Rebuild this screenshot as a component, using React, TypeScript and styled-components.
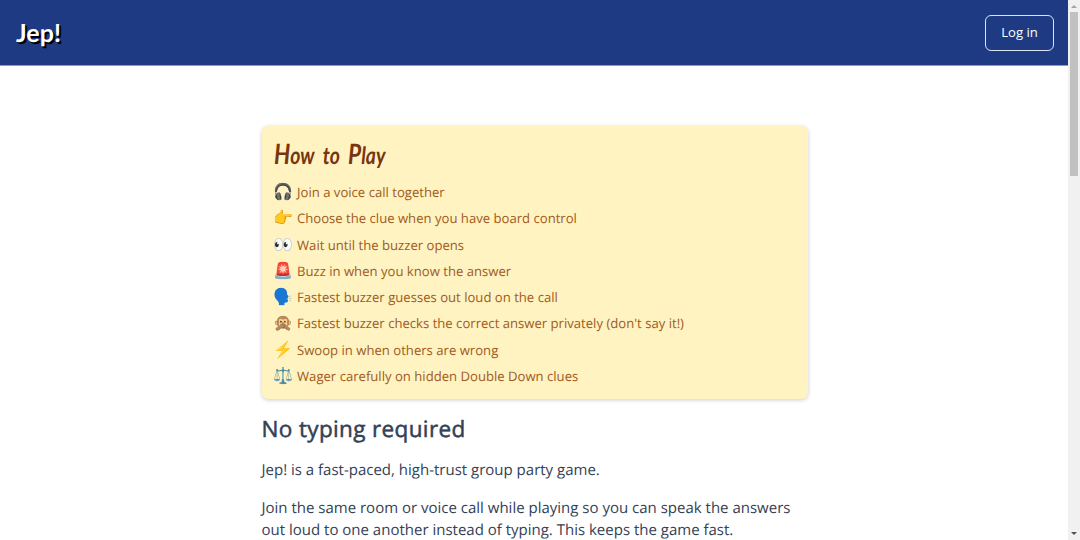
import React from 'react';
import styled, { createGlobalStyle } from 'styled-components';

const GlobalStyle = createGlobalStyle`
  * { box-sizing: border-box; }
  body { margin: 0; background: #fff; overflow: hidden; text-rendering: geometricPrecision; }
  h2, h3, p, ul { margin: 0; padding: 0; font-weight: 400; }
`;

const Window = styled.div`
  display: flex;
  height: 540px;
  overflow: hidden;
  font-family: 'Open Sans', 'Noto Color Emoji', sans-serif;
`;

const Page = styled.div`
  flex: 1;
  min-width: 0;
`;

const Header = styled.header`
  display: flex;
  align-items: center;
  justify-content: space-between;
  height: 65px;
  padding: 0 14px 0 16px;
  background: #1e3a82;
  box-shadow: 0 1px 0 #8c9bc4;
`;

const Logo = styled.span`
  font-family: Lato, sans-serif;
  font-size: 25px;
  font-weight: 700;
  line-height: 30px;
  padding-top: 1px;
  color: #fff;
  text-shadow: 1px 1px 0 #000, 2px 2px 0 #000;
`;

const LoginButton = styled.button`
  width: 69px;
  height: 36px;
  padding: 0 0 2px;
  border: 1px solid #dbe3f5;
  border-radius: 6px;
  background: transparent;
  color: #fff;
  font: 400 13.125px 'Open Sans', sans-serif;
`;

const Main = styled.main`
  width: 546px;
  margin: 60.5px 0 0 261.5px;
`;

const Card = styled.section`
  height: 273.5px;
  padding: 12px;
  border-radius: 6px;
  background: #fef3c1;
  box-shadow: 0 1px 4px rgba(0, 0, 0, 0.2);
`;

const CardTitle = styled.h2`
  display: flex;
  align-items: baseline;
  gap: 10px;
  width: max-content;
  height: 30px;
  font: italic 700 24px/30px Lato, sans-serif;
  color: #78350f;
  transform: scaleX(0.81);
  transform-origin: left;
`;

const TitleWord = styled.span`
  display: block;
  &::first-letter { font-size: ${(p: { $capital?: boolean }) => (p.$capital ? '28px' : '24px')}; }
`;

const Steps = styled.ul`
  display: flex;
  flex-direction: column;
  margin-top: 11.5px;
  list-style: none;
`;

const Step = styled.li`
  display: flex;
  align-items: center;
  gap: 4px;
  height: 26.25px;
  font-size: 13.125px;
  color: #a15a1c;
  white-space: nowrap;
`;

const Emoji = styled.span`
  width: 19.5px;
  padding-bottom: 2px;
  font-size: 16px;
  line-height: 20px;
  text-indent: -0.5px;
`;

const SectionTitle = styled.h3`
  margin-top: 15px;
  font-size: 22.5px;
  letter-spacing: 0.36px;
  line-height: 30px;
  color: #334155;
  -webkit-text-stroke: 0.5px #334155;
`;

const Paragraph = styled.p`
  margin-top: 15px;
  font-size: 15px;
  line-height: 22.5px;
  color: #334155;
`;

const Scrollbar = styled.div`
  display: flex;
  flex-direction: column;
  align-items: center;
  width: 12px;
  height: 540px;
  background: #f1f1f1;
`;

const Thumb = styled.div`
  width: 8px;
  height: 164px;
  background: #c1c1c1;
`;

const Arrow = styled.svg<{ $end?: boolean }>`
  width: 12px;
  height: 12px;
  margin-top: ${(p) => (p.$end ? 'auto' : '0')};
  fill: ${(p) => (p.$end ? '#505050' : '#a3a3a3')};
`;

const steps = [
  ['🎧', 'Join a voice call together'],
  ['👉', 'Choose the clue when you have board control'],
  ['👀', 'Wait until the buzzer opens'],
  ['🚨', 'Buzz in when you know the answer'],
  ['🗣️', 'Fastest buzzer guesses out loud on the call'],
  ['🙊', "Fastest buzzer checks the correct answer privately (don't say it!)"],
  ['⚡', 'Swoop in when others are wrong'],
  ['⚖️', 'Wager carefully on hidden Double Down clues'],
];

export default function App() {
  return (
    <>
      <GlobalStyle />
      <Window>
        <Page>
          <Header>
            <Logo>Jep!</Logo>
            <LoginButton>Log in</LoginButton>
          </Header>
          <Main>
            <Card>
              <CardTitle>
                <TitleWord $capital>How</TitleWord> <TitleWord>to</TitleWord>{' '}
                <TitleWord $capital>Play</TitleWord>
              </CardTitle>
              <Steps>
                {steps.map(([icon, text]) => (
                  <Step key={text}>
                    <Emoji>{icon}</Emoji>
                    <span>{text}</span>
                  </Step>
                ))}
              </Steps>
            </Card>
            <SectionTitle>No typing required</SectionTitle>
            <Paragraph>Jep! is a fast-paced, high-trust group party game.</Paragraph>
            <Paragraph>
              Join the same room or voice call while playing so you can speak the answers out loud
              to one another instead of typing. This keeps the game fast.
            </Paragraph>
          </Main>
        </Page>
        <Scrollbar>
          <Arrow viewBox="0 0 12 12"><path d="M3 8 6 5l3 3z" /></Arrow>
          <Thumb />
          <Arrow $end viewBox="0 0 12 12"><path d="m3 4 3 3 3-3z" /></Arrow>
        </Scrollbar>
      </Window>
    </>
  );
}
